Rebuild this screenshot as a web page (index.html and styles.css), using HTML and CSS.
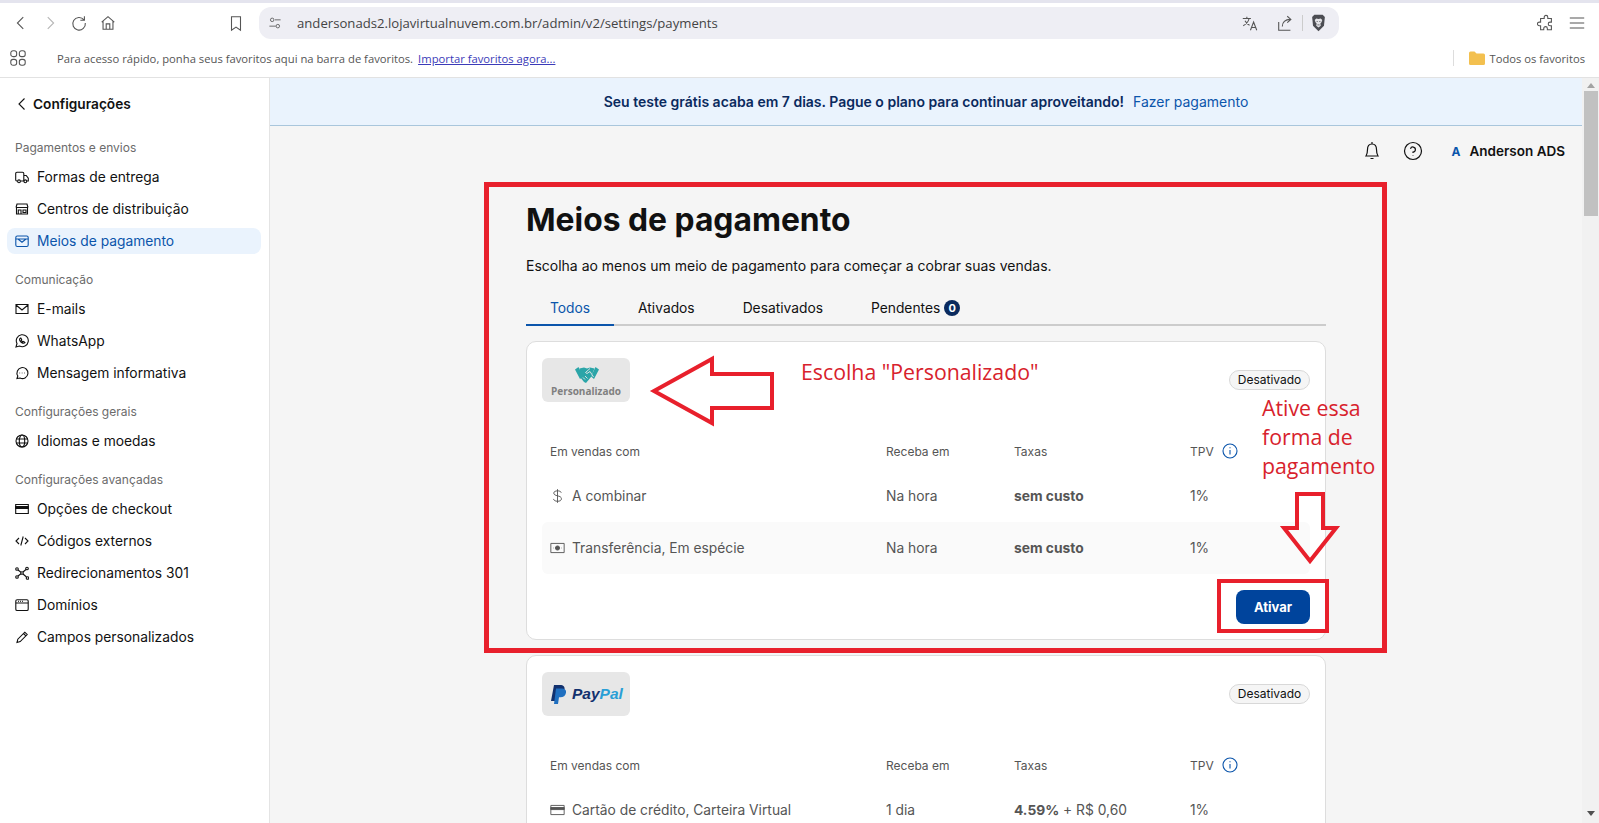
FILE: index.html

```html
<!DOCTYPE html>
<html lang="pt-BR">
<head>
    <meta charset="UTF-8">
    <title>Meios de pagamento</title>
    <link rel="stylesheet" href="styles.css">
</head>
<body>
    <div class="browser-top"></div>
    <div class="toolbar">
        <div class="nav-icons">
            <svg class="tool-icon" viewBox="0 0 20 20"><path d="M12.500 3.500 6 10l6.500 6.500"/></svg>
            <svg class="tool-icon faded" viewBox="0 0 20 20"><path d="M7.500 3.500 14 10l-6.500 6.500"/></svg>
            <svg class="tool-icon" viewBox="0 0 20 20"><path d="M15.500 6.500A7 7 0 1 0 17 10M16 2.500v4.500h-4.500"/></svg>
            <svg class="tool-icon" viewBox="0 0 20 20"><path d="M3 9l7-6 7 6M4.500 8v9h11V8M8 17v-6h4v6"/></svg>
        </div>
        <svg class="tool-icon bookmark" viewBox="0 0 20 20"><path d="M5 3h10v15l-5-3.500L5 18z"/></svg>
        <div class="urlbar">
            <svg class="tool-icon small" viewBox="0 0 20 20"><circle cx="6" cy="5.500" r="2.500"/><circle cx="14" cy="14.500" r="2.500"/><path d="M10 5.500h8M2 14.500h9"/></svg>
            <span class="url">andersonads2.lojavirtualnuvem.com.br/admin/v2/settings/payments</span>
            <svg class="tool-icon translate" viewBox="0 0 20 20"><path d="M2 5h9M6.500 3v2M9 5c-.8 3.500-3 6-6.500 8M4.500 7.500c1 2.200 2.700 3.800 5 5M10.500 18l3.500-9 3.500 9M11.700 15h4.600"/></svg>
            <svg class="tool-icon share" viewBox="0 0 20 20"><path d="M3 9v9h13M7 14c0-5 3-8 9-8M12.500 2.500 16.500 6l-4 3.500"/></svg>
            <span class="url-sep"></span>
            <svg class="brave" viewBox="0 0 20 24"><path d="M4.500 1h11l3 3-1.200 11.500-7.300 7.500-7.300-7.500L1.500 4z" fill="#4c4d53"/><path d="M5 8l2-2 3 .8 3-.8 2 2-1 3-1.500 1.500.5 3L10 18l-3-2.500.5-3L6 11z" fill="#e4e4e8"/><path d="M7.500 10h1.500M11 10h1.500M8.500 14.500h3" stroke="#4c4d53" fill="none"/></svg>
        </div>
        <div class="window-icons">
            <svg class="tool-icon" viewBox="0 0 20 20"><path d="M8 3.500a2 2 0 0 1 4 0V5h4v4h-1.500a2 2 0 0 0 0 4H16v4.500h-4.500V16a2 2 0 0 0-4 0v1.500H4V13H2.500a2 2 0 0 1 0-4H4V5h4z"/></svg>
            <svg class="tool-icon" viewBox="0 0 20 20"><path d="M2 4.500h16M2 10h16M2 15.500h16"/></svg>
        </div>
    </div>

    <div class="bookmarks">
        <svg class="tool-icon apps" viewBox="0 0 20 20"><rect x="2" y="2" width="6.500" height="6.500" rx="2.500"/><rect x="11.500" y="2" width="6.500" height="6.500" rx="2.500"/><rect x="2" y="11.500" width="6.500" height="6.500" rx="2.500"/><rect x="11.500" y="11.500" width="6.500" height="6.500" rx="2.500"/></svg>
        <span class="bookmarks-text">Para acesso rápido, ponha seus favoritos aqui na barra de favoritos.</span>
        <a class="bookmarks-link" href="#">Importar favoritos agora...</a>
        <span class="bookmarks-sep"></span>
        <svg class="folder" viewBox="0 0 16 14"><path d="M0 2a1.500 1.500 0 0 1 1.500-1.500h4L7.500 2.500h7A1.500 1.500 0 0 1 16 4v8.500a1.500 1.500 0 0 1-1.500 1.500h-13A1.500 1.500 0 0 1 0 12.500z" fill="#f3c04f"/></svg>
        <span class="bookmarks-all">Todos os favoritos</span>
    </div>

    <div class="app">
        <aside class="sidebar">
            <a class="back-link" href="#">
                <svg class="icon" viewBox="0 0 14 14"><path d="M9.500 1.500 4 7l5.500 5.500"/></svg>
                Configurações
            </a>
            <div class="side-group">
                <div class="side-label">Pagamentos e envios</div>
                <a class="side-item" href="#"><svg class="icon" viewBox="0 0 14 14"><path d="M2.500 11H1.800A1.300 1.300 0 0 1 .7 9.700V3.500a1.300 1.300 0 0 1 1.300-1.300h5.500a1.300 1.300 0 0 1 1.300 1.300V11H5.500M8.800 5.500h2.400l2.100 2.700V11h-1.400"/><circle cx="4" cy="11.300" r="1.400"/><circle cx="10.300" cy="11.300" r="1.400"/></svg>Formas de entrega</a>
                <a class="side-item" href="#"><svg class="icon" viewBox="0 0 14 14"><path d="M1 5.500 2 2h10l1 3.500M1 5.500h12M1.500 5.500V12h11V5.500M3.300 12V8h2.700v4M8 8h3v2.500H8z"/></svg>Centros de distribuição</a>
                <a class="side-item active" href="#"><svg class="icon" viewBox="0 0 14 14"><rect x=".8" y="2" width="12.400" height="10.500" rx="1.500"/><path d="M.8 5h12.400M3 5l4 3.200L11 5"/></svg>Meios de pagamento</a>
            </div>
            <div class="side-group">
                <div class="side-label">Comunicação</div>
                <a class="side-item" href="#"><svg class="icon" viewBox="0 0 14 14"><path d="M1 2.500h12v9H1zM1 3l6 5 6-5"/></svg>E-mails</a>
                <a class="side-item" href="#"><svg class="icon" viewBox="0 0 14 14"><path d="M1 13l1-3.500A6 6 0 1 1 4.500 12zM5 4.500c-1 1 0 3 1.500 4s2.500 1.200 3.500.2L8.700 7.500l-1 .5-1.500-1.500.5-1L5.800 4z"/></svg>WhatsApp</a>
                <a class="side-item" href="#"><svg class="icon" viewBox="0 0 14 14"><path d="M2 12.500l.8-2.500A5.500 5.500 0 1 1 5 12zM4.500 7h.6M6.800 7h.6M9 7h.6"/></svg>Mensagem informativa</a>
            </div>
            <div class="side-group">
                <div class="side-label">Configurações gerais</div>
                <a class="side-item" href="#"><svg class="icon" viewBox="0 0 14 14"><circle cx="7" cy="7" r="6"/><ellipse cx="7" cy="7" rx="2.700" ry="6"/><path d="M1.300 5h11.400M1.300 9h11.400"/></svg>Idiomas e moedas</a>
            </div>
            <div class="side-group">
                <div class="side-label">Configurações avançadas</div>
                <a class="side-item" href="#"><svg class="icon" viewBox="0 0 14 14"><path d="M.7 2.500h12.600v9H.7z"/><path class="icon-bar" d="M.7 4.500h12.600v2H.7z"/></svg>Opções de checkout</a>
                <a class="side-item" href="#"><svg class="icon" viewBox="0 0 14 14"><path d="M4 4 1 7l3 3M10 4l3 3-3 3M8.200 2.500 5.800 11.500"/></svg>Códigos externos</a>
                <a class="side-item" href="#"><svg class="icon" viewBox="0 0 14 14"><circle cx="2" cy="3" r="1.300"/><circle cx="2" cy="11" r="1.300"/><circle cx="7" cy="7" r="1.300"/><circle cx="12" cy="2.500" r="1.300"/><circle cx="12.500" cy="12" r="1.300"/><path d="M3 4l3 2.200M3 10l3-2.200M8 6l3-2.500M8 8l3.500 3"/></svg>Redirecionamentos 301</a>
                <a class="side-item" href="#"><svg class="icon" viewBox="0 0 14 14"><rect x=".8" y="1.800" width="12.400" height="10.700" rx="1.300"/><path d="M.8 5h12.400M3 3.400h.8M5 3.400h.8M7 3.400h.8"/></svg>Domínios</a>
                <a class="side-item" href="#"><svg class="icon" viewBox="0 0 14 14"><path d="M2 12.500l.8-3.300L9.800 2.200l2.400 2.400-7 7zM8.500 3.500l2.400 2.400"/></svg>Campos personalizados</a>
            </div>
        </aside>

        <main class="main">
            <div class="banner">
                <strong>Seu teste grátis acaba em 7 dias. Pague o plano para continuar aproveitando!</strong>
                <a href="#">Fazer pagamento</a>
            </div>
            <div class="topbar">
                <svg class="top-icon bell" viewBox="0 0 18 20"><path d="M3 15c1-1.500 1.500-3 1.500-6.500S6.500 3 9 3s4.500 2 4.500 5.500S14 13.500 15 15zM7.500 17.500h3M9 1v2"/></svg>
                <svg class="top-icon help" viewBox="0 0 20 20"><circle cx="10" cy="10" r="8.500"/><path d="M7.500 7.800A2.500 2.500 0 1 1 10 11v1M10 14.500v.5"/></svg>
                <span class="avatar">A</span>
                <span class="user">Anderson ADS</span>
            </div>

            <div class="content">
                <h1>Meios de pagamento</h1>
                <p class="intro">Escolha ao menos um meio de pagamento para começar a cobrar suas vendas.</p>
                <nav class="tabs">
                    <a class="tab current" href="#">Todos</a>
                    <a class="tab" href="#">Ativados</a>
                    <a class="tab" href="#">Desativados</a>
                    <a class="tab" href="#">Pendentes <span class="count">0</span></a>
                </nav>

                <section class="card">
                    <div class="card-head">
                        <div class="logo">
                            <svg class="handshake" viewBox="0 0 24 18">
                                <path d="M0 3.500 3.500 1 8 10.500 5 13zM24 3.500 20.500 1 16 10.500 19 13z" fill="#2ba5a8"/>
                                <path d="M4.500 2.500 9 1.500l3 1 3-1 4.500 1L16 11l-5 6-2-1-4-5z" fill="#2ba5a8"/>
                                <path d="M15 2.500 10.500 6.500l1.500 1 3-2 3.500 5.500M8 11.500l2 2M10 10l2.500 2.500" stroke="#e7e7e7" stroke-width=".9" fill="none"/>
                            </svg>
                            <span class="logo-name">Personalizado</span>
                        </div>
                        <span class="status">Desativado</span>
                    </div>
                    <div class="row head">
                        <span>Em vendas com</span><span>Receba em</span><span>Taxas</span>
                        <span class="tpv">TPV <svg class="info" viewBox="0 0 16 16"><circle cx="8" cy="8" r="7"/><path d="M8 7v4.500M8 4.200v1"/></svg></span>
                    </div>
                    <div class="row">
                        <span class="method"><svg class="method-icon" viewBox="0 0 18 18"><path d="M13.500 5c-.5-1.500-2.200-2.200-4.500-2.200S4.500 3.700 4.500 5.500 6.500 8.200 9 8.800s4.700 1.200 4.700 3.500-2 3-4.700 3-4.500-1-4.800-2.800M9 .8v16.400"/></svg>A combinar</span>
                        <span>Na hora</span><span><b>sem custo</b></span><span>1%</span>
                    </div>
                    <div class="row striped">
                        <span class="method"><svg class="method-icon" viewBox="0 0 18 18"><path d="M1 3.500h16v11H1z"/><circle class="icon-bar" cx="9" cy="9" r="2.500"/><path d="M4 9h.5M13.500 9h.5"/></svg>Transferência, Em espécie</span>
                        <span>Na hora</span><span><b>sem custo</b></span><span>1%</span>
                    </div>
                    <div class="card-foot"><button class="activate">Ativar</button></div>
                </section>

                <section class="card">
                    <div class="card-head">
                        <div class="logo paypal">
                            <svg class="paypal-mark" viewBox="0 0 15 19"><path d="M3 0h6c3.500 0 5 2 4.500 4.500C13 8 10.500 9.500 7.500 9.500H5.500L4.300 16H0z" fill="#12316e"/><path d="M5 3.500h6c3 0 4.500 1.800 4 4.300-.5 3-2.800 4.500-5.500 4.500H8L7 19H3z" fill="#1f6fc0"/></svg>
                            <span class="paypal-name">Pay<i>Pal</i></span>
                        </div>
                        <span class="status">Desativado</span>
                    </div>
                    <div class="row head">
                        <span>Em vendas com</span><span>Receba em</span><span>Taxas</span>
                        <span class="tpv">TPV <svg class="info" viewBox="0 0 16 16"><circle cx="8" cy="8" r="7"/><path d="M8 7v4.500M8 4.200v1"/></svg></span>
                    </div>
                    <div class="row">
                        <span class="method"><svg class="method-icon" viewBox="0 0 18 18"><path d="M1 3.500h16v11H1z"/><path class="icon-bar" d="M1 6h16v2.500H1z"/></svg>Cartão de crédito, Carteira Virtual</span>
                        <span>1 dia</span><span><b>4.59%</b> + R$ 0,60</span><span>1%</span>
                    </div>
                </section>
            </div>
        </main>

        <div class="scrollbar">
            <span class="scroll-up"></span>
            <span class="scroll-thumb"></span>
            <span class="scroll-down"></span>
        </div>
    </div>

    <!-- red notes drawn on top of the screenshot -->
    <svg class="notes" viewBox="0 0 1599 823">
        <rect x="486.500" y="184.500" width="898" height="466"/>
        <rect x="1219" y="581" width="108" height="50"/>
        <path d="M654 391 712 359v15h60v34h-60v15z"/>
        <path d="M1297 494h26v34h13l-26 33-26-33h13z"/>
    </svg>
    <span class="note note-choose">Escolha "Personalizado"</span>
    <span class="note note-activate">Ative essa<br>forma de<br>pagamento</span>
</body>
</html>
```

FILE: styles.css

```css
* {
    box-sizing: border-box;
}

html, body {
    height: 823px;
    overflow: hidden;
}

body {
    margin: 0;
    font-family: Inter, "Noto Sans", sans-serif;
    font-size: 14px;
    color: #111;
    background-color: #fff;
    display: flex;
    flex-direction: column;
}

a {
    color: inherit;
    text-decoration: none;
}

/* browser chrome */
.browser-top {
    height: 3px;
    background-color: #e4e4ee;
}

.toolbar {
    height: 40px;
    display: flex;
    align-items: center;
    padding: 4px 12px 4px 12px;
}

.tool-icon {
    width: 18px;
    height: 18px;
    fill: none;
    stroke: #555;
    stroke-width: 1.2;
    flex: none;
}

.tool-icon.faded {
    stroke: #b5b5b5;
}

.tool-icon.small {
    width: 14px;
    height: 14px;
}

.nav-icons {
    display: flex;
    gap: 11px;
    width: 215px;
}

.bookmark {
    margin-right: 14px;
}

.urlbar {
    width: 1080px;
    height: 32px;
    background-color: #eeeef4;
    border-radius: 12px;
    display: flex;
    align-items: center;
    padding-left: 9px;
}

.url {
    margin-left: 15px;
    font-family: "Open Sans", sans-serif;
    font-size: 13.150px;
    color: #444;
    flex: 1;
}

.share {
    margin-left: 17px;
}

.url-sep {
    width: 1px;
    height: 16px;
    background-color: #ccc;
    margin: 0 8px 0 8px;
}

.brave {
    width: 15px;
    height: 18px;
    margin-right: 13px;
}

.window-icons {
    margin-left: auto;
    display: flex;
    gap: 13px;
    padding-right: 1px;
}

.bookmarks {
    height: 35px;
    display: flex;
    align-items: center;
    padding: 0 14px 4px 9px;
    border-bottom: 1px solid #e2e2e2;
    font-family: "Open Sans", sans-serif;
    font-size: 11.250px;
    color: #555;
}

.apps {
    margin-right: 30px;
}

.bookmarks-link {
    margin-left: 5px;
    color: #3b3bb8;
    text-decoration: underline;
}

.bookmarks-sep {
    width: 1px;
    height: 16px;
    background-color: #ddd;
    margin-left: auto;
}

.folder {
    width: 16px;
    height: 14px;
    margin: 0 5px 0 15px;
}

.bookmarks-all {
    font-size: 11.200px;
}

/* page layout */
.app {
    flex: 1;
    display: flex;
    min-height: 0;
}

.sidebar {
    width: 270px;
    flex: none;
    border-right: 1px solid #e4e4e4;
    padding: 16px 8px 0 7px;
    display: flex;
    flex-direction: column;
    gap: 16px;
}

.icon {
    width: 14px;
    height: 14px;
    fill: none;
    stroke: currentColor;
    stroke-width: 1.1;
    flex: none;
}

.icon-bar {
    fill: currentColor;
}

.back-link {
    height: 20px;
    display: flex;
    align-items: center;
    gap: 4px;
    padding-left: 8px;
    margin-bottom: 8px;
    font-weight: 600;
    font-size: 13.700px;
}

.back-link .icon {
    width: 14px;
}

.side-group {
    display: flex;
    flex-direction: column;
    gap: 6px;
}

.side-label {
    height: 20px;
    line-height: 20px;
    padding-left: 8px;
    font-size: 12px;
    color: #6b6b6b;
}

.side-item {
    height: 26px;
    display: flex;
    align-items: center;
    gap: 8px;
    padding-left: 8px;
    border-radius: 8px;
    font-size: 13.800px;
}

.side-item.active {
    background-color: #eaf3fd;
    color: #0b55ab;
}

.main {
    flex: 1;
    min-width: 0;
    background-color: #f5f5f5;
    overflow: hidden;
}

.banner {
    height: 48px;
    display: flex;
    justify-content: center;
    align-items: center;
    gap: 9px;
    background-color: #eaf3fd;
    border-bottom: 1px solid #a9c6dc;
    font-size: 14px;
    color: #0a2a5e;
}

.banner strong {
    font-weight: 600;
}

.banner a {
    color: #0b55ab;
}

.topbar {
    height: 50px;
    display: flex;
    align-items: center;
    justify-content: flex-end;
    padding-right: 17px;
}

.top-icon {
    fill: none;
    stroke: #111;
    stroke-width: 1.2;
    width: 20px;
    height: 20px;
}

.help {
    margin-left: 21px;
}

.avatar {
    margin-left: 29px;
    color: #0b55ab;
    font-size: 12px;
    font-weight: 700;
}

.user {
    margin-left: 9px;
    font-size: 13.500px;
    font-weight: 600;
}

/* payment list */
.content {
    width: 800px;
    margin: 0 auto;
    padding-top: 24px;
}

h1 {
    margin: 0 0 16px;
    font-size: 31.800px;
    line-height: 40px;
    font-weight: 700;
}

.intro {
    margin: 0 0 21px;
    line-height: 20px;
    font-size: 14px;
}

.tabs {
    display: flex;
    height: 29px;
    border-bottom: 2px solid #ccc;
    margin-bottom: 15px;
}

.tab {
    height: 29px;
    padding: 0 24px;
    line-height: 22px;
    font-size: 13.800px;
}

.tab.current {
    color: #0b55ab;
    border-bottom: 2px solid #0b55ab;
}

.count {
    display: inline-block;
    width: 16px;
    height: 16px;
    border-radius: 50%;
    background-color: #0a2a5e;
    color: #fff;
    font-size: 11px;
    font-weight: 700;
    line-height: 16px;
    text-align: center;
    vertical-align: 1px;
}

.card {
    background-color: #fff;
    border: 1px solid #ddd;
    border-radius: 10px;
    padding: 16px 15px 15px;
    margin-bottom: 15px;
}

.card-head {
    display: flex;
    align-items: center;
    justify-content: space-between;
    margin-bottom: 32px;
}

.logo {
    width: 88px;
    height: 44px;
    border-radius: 6px;
    background-color: #e7e7e7;
    display: flex;
    flex-direction: column;
    align-items: center;
    padding-top: 8px;
}

.handshake {
    width: 24px;
    height: 18px;
    margin-left: 2px;
}

.logo-name {
    font-family: "Open Sans", sans-serif;
    font-size: 10px;
    font-weight: 700;
    line-height: 13px;
    margin-top: 1px;
    color: #808080;
}

.logo.paypal {
    flex-direction: row;
    justify-content: flex-start;
    gap: 6px;
    padding: 0 0 0 9px;
}

.paypal-mark {
    width: 15px;
    height: 19px;
}

.paypal-name {
    font-family: "Liberation Sans", sans-serif;
    font-size: 15.500px;
    font-weight: 700;
    font-style: italic;
    color: #12316e;
}

.paypal-name i {
    color: #2a9fd6;
}

.status {
    width: 81px;
    height: 20px;
    border: 1px solid #d8d8d8;
    border-radius: 10px;
    background-color: #f5f5f5;
    font-size: 12px;
    line-height: 18px;
    text-align: center;
}

.row {
    display: grid;
    grid-template-columns: 336px 128px 176px 1fr;
    align-items: center;
    height: 52px;
    padding-left: 8px;
    font-size: 13.800px;
    color: #555;
}

.row b {
    font-weight: 700;
}

.row.head {
    height: 36px;
    padding-bottom: 2px;
    font-size: 12px;
}

.row.striped {
    background-color: #fafafa;
    border-radius: 6px;
}

.method {
    display: flex;
    align-items: center;
    gap: 7px;
}

.method-icon {
    width: 15px;
    height: 16px;
    fill: none;
    stroke: #555;
    stroke-width: 1.1;
    flex: none;
}

.tpv {
    display: flex;
    align-items: center;
    gap: 8px;
}

.info {
    width: 16px;
    height: 16px;
    fill: none;
    stroke: #0b55ab;
    stroke-width: 1.100;
}

.card-foot {
    display: flex;
    justify-content: flex-end;
    margin-top: 16px;
}

.activate {
    width: 74px;
    height: 34px;
    border: none;
    border-radius: 8px;
    background-color: #00449c;
    color: #fff;
    font-family: inherit;
    font-size: 13px;
    font-weight: 700;
}

/* scrollbar */
.scrollbar {
    width: 17px;
    flex: none;
    background-color: #f1f1f1;
    padding-top: 5px;
    display: flex;
    flex-direction: column;
    align-items: center;
    position: relative;
}

.scroll-up {
    border: 4px solid transparent;
    border-top: none;
    border-bottom: 5px solid #a3a3a3;
}

.scroll-thumb {
    width: 14px;
    height: 125px;
    margin-top: 3px;
    background-color: #c1c1c1;
}

.scroll-down {
    border: 4px solid transparent;
    border-bottom: none;
    border-top: 5px solid #505050;
    margin-top: auto;
    margin-bottom: 7px;
}

/* annotations */
.notes {
    position: absolute;
    left: 0;
    top: 0;
    width: 1599px;
    height: 823px;
    fill: none;
    stroke: #e8202c;
    pointer-events: none;
}

.notes rect:first-child {
    stroke-width: 5;
}

.notes rect,
.notes path {
    stroke-width: 4;
}

.note {
    position: absolute;
    font-family: "Open Sans", sans-serif;
    font-size: 21.300px;
    line-height: 29px;
    color: #d8222c;
}

.note-choose {
    left: 801px;
    top: 357px;
}

.note-activate {
    left: 1262px;
    top: 393px;
}
```
